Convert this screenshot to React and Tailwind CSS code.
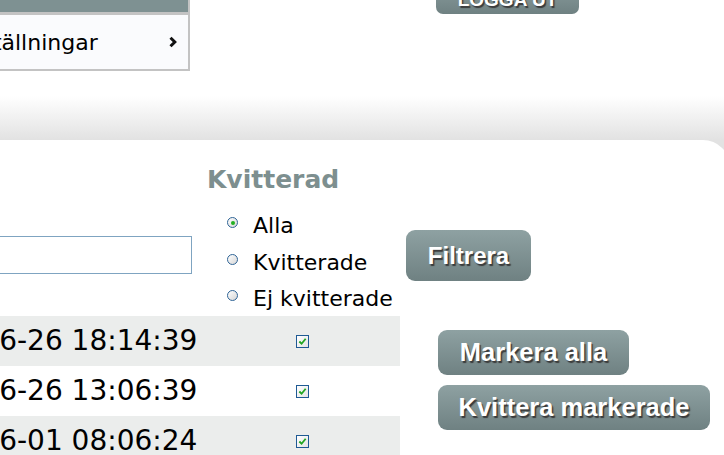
import React from 'react';

const btn =
  'flex items-center justify-center rounded-[9px] bg-[linear-gradient(to_bottom,#8ea1a2,#6f8182)] text-white font-bold [font-family:"Liberation_Sans",Arial,sans-serif] [text-shadow:1.5px_1.5px_1px_#3a3a3a]';

const Radio = ({ checked, label }) => (
  <div className="flex h-[36.5px] items-start">
    <span className="mt-[9px] ml-[20px] flex h-[11px] w-[11px] shrink-0 items-center justify-center rounded-full border border-[#2f6496] bg-[linear-gradient(135deg,#ffffff,#d6d6d6)]">
      {checked && <span className="h-[4px] w-[4px] rounded-full bg-[#22b022]" />}
    </span>
    <span className="ml-[15px] text-[22px] leading-[36.5px] text-black">{label}</span>
  </div>
);

const Check = () => (
  <span className="flex h-[13px] w-[13px] items-center justify-center border border-[#1f5a94] bg-[linear-gradient(135deg,#ffffff,#e4e4e4)]">
    <svg viewBox="0 0 10 10" className="h-[9px] w-[9px]">
      <path d="M1.5 5 L4 7.5 L8.5 2" fill="none" stroke="#21a621" strokeWidth="2" />
    </svg>
  </span>
);

const rows = [
  { date: '2012-06-26 18:14:39', gray: true },
  { date: '2012-06-26 13:06:39', gray: false },
  { date: '2012-06-01 08:06:24', gray: true },
];

export default function App() {
  return (
    <div className="flex h-[455px] w-[724px] flex-col overflow-hidden bg-[linear-gradient(to_bottom,#ffffff_0px,#ffffff_96px,#e2e2e2_140px,#e2e2e2_100%)] [font-family:'DejaVu_Sans',Verdana,sans-serif]">
      {/* header */}
      <div className="flex h-[140px] shrink-0 items-start">
        <div className="-ml-[60px] w-[250px] shrink-0 border-r-2 border-b-2 border-[#c3c3c3]">
          <div className="h-[12px] bg-[#7e9192]" />
          <div className="h-[3px] bg-[#c3c3c3]" />
          <div className="flex h-[54px] items-center justify-between bg-[#fafbfd] pl-[21px] pr-[11px]">
            <span className="text-[22px] text-black">Inställningar</span>
            <svg viewBox="0 0 8 12" className="h-[12px] w-[8px]">
              <path d="M1.5 1.8 L5.8 6 L1.5 10.2" fill="none" stroke="#111" strokeWidth="3" />
            </svg>
          </div>
        </div>
        <div className={`ml-[246px] -mt-[22px] w-[143px] rounded-b-[7px] pt-[12px] pb-[5px] text-[19px] leading-none ${btn} rounded-t-none`}>
          LOGGA UT
        </div>
      </div>

      {/* panel */}
      <div className="flex w-[730px] flex-1 flex-col rounded-tr-[27px] bg-white">
        <div className="flex h-[176px] shrink-0">
          <div className="w-[207px] shrink-0 pt-[96px]">
            <div className="-ml-[20px] h-[38px] w-[212px] border border-[#7fa4c1] bg-white" />
          </div>
          <div className="w-[199px] shrink-0 pt-[27px]">
            <div className="text-[25px] font-bold leading-none text-[#7d8f8f]">Kvitterad</div>
            <div className="mt-[16px]">
              <Radio checked label="Alla" />
              <Radio label="Kvitterade" />
              <Radio label="Ej kvitterade" />
            </div>
          </div>
          <div className="pt-[90px]">
            <div className={`h-[51px] w-[125px] text-[24px] ${btn}`}>Filtrera</div>
          </div>
        </div>

        <div className="flex">
          <div className="-ml-[100px] w-[500px] shrink-0">
            {rows.map((r) => (
              <div key={r.date} className={`flex h-[50px] items-center ${r.gray ? 'bg-[#ebedec]' : 'bg-white'}`}>
                <div className="w-[305px] text-[28px] leading-[50px] text-black">{r.date}</div>
                <div className="flex flex-1 justify-center">
                  <Check />
                </div>
              </div>
            ))}
          </div>
          <div className="ml-[38px] flex flex-col gap-[10px] pt-[14px]">
            <div className={`h-[45px] w-[191px] text-[25.5px] ${btn}`}>Markera alla</div>
            <div className={`h-[45px] w-[272px] text-[25.5px] ${btn}`}>Kvittera markerade</div>
          </div>
        </div>
      </div>
    </div>
  );
}
